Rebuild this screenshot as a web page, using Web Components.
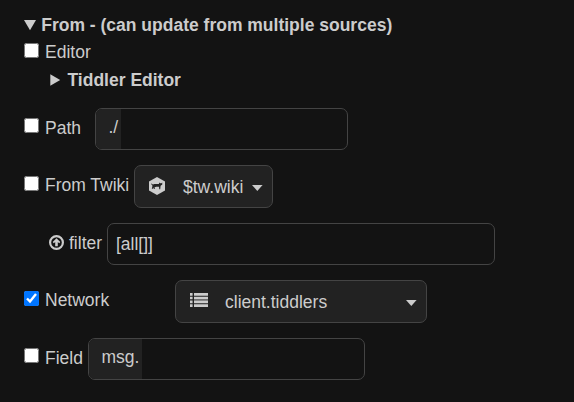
<!DOCTYPE html>
<html lang="en">
<head>
<meta charset="utf-8">
<title>Sources</title>
<style>
html,body{margin:0;height:100%;background:#131313}
body{overflow:hidden;font:17.5px/20px "Liberation Sans",Arial,sans-serif;color:#ccc}
</style>
</head>
<body>
<source-panel></source-panel>
<script>
const define=(name,html)=>customElements.define(name,class extends HTMLElement{
  constructor(){
    super();
    const t=document.createElement('template');
    t.innerHTML=html;
    this.attachShadow({mode:'open'}).append(t.content.cloneNode(true));
    const box=this.shadowRoot.querySelector('input[type=checkbox]');
    if(box) box.checked=this.hasAttribute('checked');
  }
});

define('disclosure-title',`<style>
:host{display:flex;height:20px;font-weight:bold;white-space:nowrap}
svg{display:block;width:12px;height:12px;margin:4px 5.2px 0 0;fill:#ccc;flex:none}
.closed{display:none}
:host([closed]) .closed{display:block}
:host([closed]) .open{display:none}
:host([closed]) svg{margin-right:5.5px}
</style>
<svg class="open" viewBox="0 0 12 12"><path d="M0 1H12L6 11.2z"/></svg>
<svg class="closed" viewBox="0 0 12 12"><path d="M.3 .3V11.7L10.2 6z"/></svg>
<slot></slot>`);

define('check-label',`<style>
:host{display:flex;height:20px;white-space:nowrap}
input{width:15px;height:15px;margin:var(--box-top,1px) 6px 0 0;flex:none}
</style><input type="checkbox"><span><slot></slot></span>`);

define('field-row',`<style>
:host{display:flex;align-items:flex-start}
</style><slot></slot>`);

define('prefix-input',`<style>
:host{display:flex;box-sizing:border-box;height:42px;border:1px solid #444;border-radius:7px;overflow:hidden;background:#131313}
span{box-sizing:border-box;padding:8px 3px 0 12.5px;background:#222;white-space:nowrap}
:host([plain]) span{background:none;padding:10px 0 0 8px}
</style><span><slot></slot></span>`);

define('type-button',`<style>
:host{display:flex;box-sizing:border-box;height:43px;border:1px solid #444;border-radius:7px;background:#222;padding:11px 9px 0 14px;white-space:nowrap}
.caret{width:11px;height:6px;margin:8px 0 0 auto;fill:#ccc;flex:none}
.label{margin-left:17px}
</style><slot name="icon"></slot><span class="label"><slot></slot></span>
<svg class="caret" viewBox="0 0 11 6"><path d="M0 0H10.6L5.3 6z"/></svg>`);

define('cat-icon',`<style>:host{display:block;width:17px;height:18px}svg{display:block}</style>
<svg width="16" height="18" viewBox="0 0 16 18"><path fill="#ccc" d="M8 0L16 4.5V13.5L8 18L0 13.5V4.5z"/>
<path fill="#222" d="M2.2 6.4C3 6.4 3.1 7.4 4 7.4C6 6.8 8 7.3 9.8 6.9L10.5 5.5L11.3 6.2H12.5L13.2 5.6L13.3 7.5L11.6 8.7L11.2 12.3H10.3L10 9.8L7.3 9.7L5.6 10.2L5.8 12.1H4.9L4.2 10.5L3.5 12H2.8L3.4 9.3L3.3 8.2L2 7.1z"/></svg>`);

define('list-icon',`<style>:host{display:block;width:18px;height:14px}svg{display:block}</style>
<svg width="18" height="14" viewBox="0 0 18 14" fill="#ccc"><path d="M0 0H2.6V2.7H0zM4 0H18V2.7H4zM0 3.8H2.6V6.3H0zM4 3.8H18V6.3H4zM0 7.5H2.6V10.2H0zM4 7.5H18V10.2H4zM0 11.3H2.6V14H0zM4 11.3H18V14H4z"/><path opacity=".4" d="M4 6.3H18V7.5H4z"/></svg>`);

define('up-icon',`<style>:host{display:block;width:15px;height:15px}svg{display:block}</style>
<svg width="15" height="15" viewBox="0 0 15 15"><circle cx="7.5" cy="7.5" r="6.4" fill="none" stroke="#ccc" stroke-width="2.2"/><path fill="#ccc" d="M7.5 3.2L11.3 7L10.2 8.2L8.8 7V11.3H6.2V7L4.8 8.2L3.7 7z"/></svg>`);

define('source-panel',`<style>
:host{display:flex;flex-direction:column;box-sizing:border-box;height:402px;padding:15px 0 0 24px}
.editor{margin-top:7px}
.sub{margin:8px 0 0 26px}
.path{margin-top:18px}
.path check-label,.field check-label{margin-top:10px;--box-top:0px}
.path check-label{width:71px}
.path prefix-input{width:253px}
.twiki{margin-top:15px}
.twiki check-label{width:110px;margin-top:10px}
.twiki type-button{width:139px}
.filter{margin:15px 0 0 25px}
.filter up-icon{margin:12px 5px 0 0}
.filter span{width:38px;margin-top:10px}
.filter prefix-input{width:388px}
.net{margin-top:15px}
.net check-label{width:151px;margin-top:10px}
.net type-button{width:252px}
.field{margin-top:15px}
.field check-label{width:64px}
.field prefix-input{width:277px}
list-icon{margin-top:1px}
</style>
<disclosure-title>From - (can update from multiple sources)</disclosure-title>
<check-label class="editor">Editor</check-label>
<disclosure-title class="sub" closed>Tiddler Editor</disclosure-title>
<field-row class="path"><check-label>Path</check-label><prefix-input>./</prefix-input></field-row>
<field-row class="twiki"><check-label>From Twiki</check-label><type-button><cat-icon slot="icon"></cat-icon>$tw.wiki</type-button></field-row>
<field-row class="filter"><up-icon></up-icon><span>filter</span><prefix-input plain>[all[]]</prefix-input></field-row>
<field-row class="net"><check-label checked>Network</check-label><type-button><list-icon slot="icon"></list-icon>client.tiddlers</type-button></field-row>
<field-row class="field"><check-label>Field</check-label><prefix-input>msg.</prefix-input></field-row>`);
</script>
</body>
</html>
